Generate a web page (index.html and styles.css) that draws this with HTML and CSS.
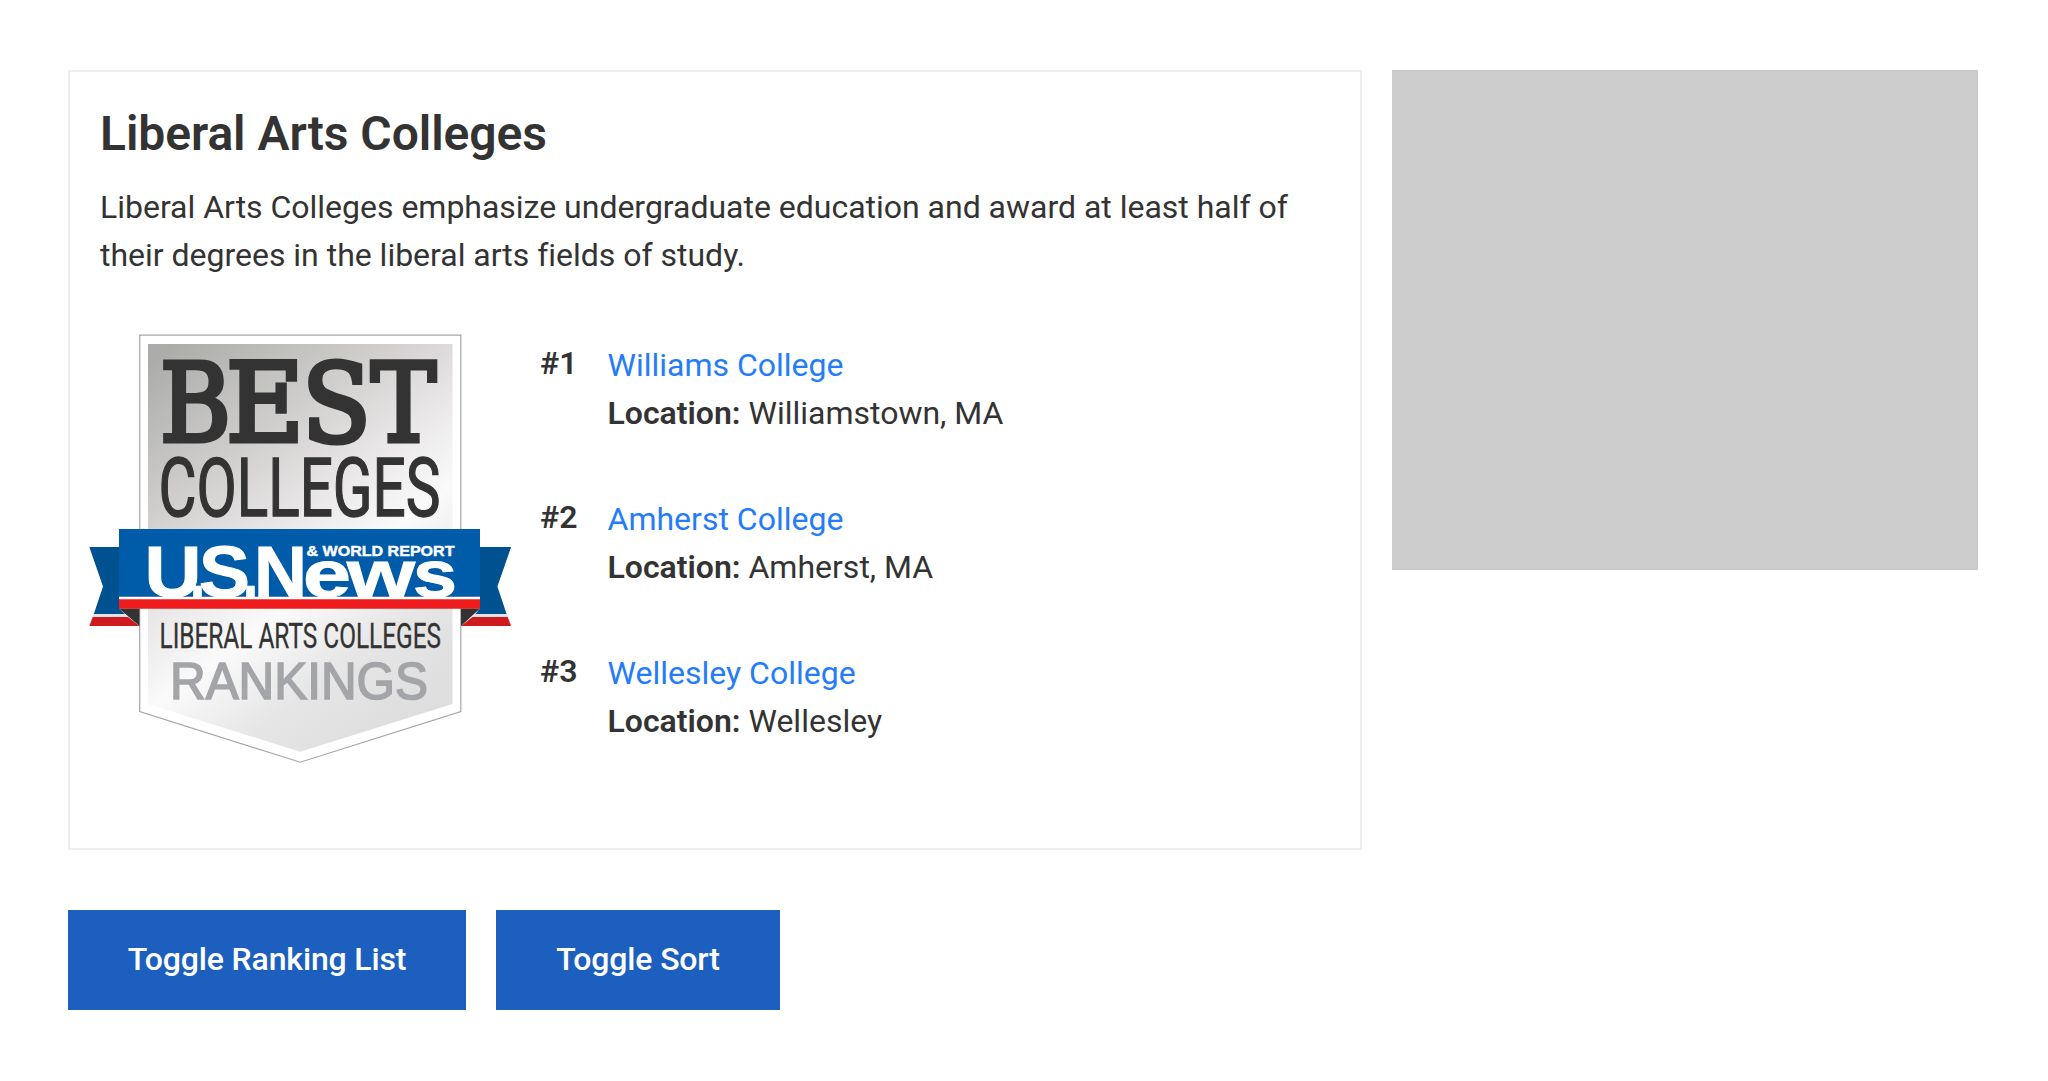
FILE: index.html
```html
<!DOCTYPE html>
<html lang="en">
<head>
<meta charset="utf-8">
<title>Liberal Arts Colleges</title>
<link rel="stylesheet" href="styles.css">
</head>
<body>
<main class="page">
  <div class="columns">
    <section class="card">
      <h2 class="card-title">Liberal Arts Colleges</h2>
      <p class="card-text">Liberal Arts Colleges emphasize undergraduate education and award at least half of their degrees in the liberal arts fields of study.</p>
      <div class="card-body">
        <svg class="badge" viewBox="88 330 426 436" role="img" aria-label="Best Colleges badge">
          <defs>
            <linearGradient id="silver" gradientUnits="userSpaceOnUse" x1="140" y1="370" x2="400" y2="720">
              <stop offset="0" stop-color="#acacab"/>
              <stop offset=".28" stop-color="#cfcecd"/>
              <stop offset=".5" stop-color="#eceaea"/>
              <stop offset=".64" stop-color="#fafafa"/>
              <stop offset=".82" stop-color="#e6e6e6"/>
              <stop offset="1" stop-color="#dedede"/>
            </linearGradient>
          </defs>
          <path d="M139.7 335.2H460.8V711.6L300.2 762.2L139.7 711.6Z" fill="#fff" stroke="#a5a6a9" stroke-width="1.2"/>
          <path d="M148 344H452.5V704L300.2 751.8L148 704Z" fill="url(#silver)"/>
          <path d="M89.3 547H119.5V609L125 614H93.8L103 586.5ZM511.1 547H479.5V609L475.4 614H506.6L497.4 586.5Z" fill="#00518f"/>
          <path d="M93.8 614H125L128 617H92.7ZM506.6 614H475.4L472.4 617H507.7Z" fill="#e3e1e4"/>
          <path d="M92.7 617H128L139.5 626H89.3ZM507.7 617H472.4L461 626H511.1Z" fill="#ce1b20"/>
          <path d="M119 608.5H139.5V626ZM480 608.5H461V626Z" fill="#333"/>
          <path d="M119 529H480V597H119Z" fill="#005ba8"/>
          <path d="M119 596.8H480V599.5H119Z" fill="#fff"/>
          <path d="M119 599.2H480V608.8H119Z" fill="#ee1c1c"/>
          <g class="best">
            <text x="160" y="441" textLength="71" lengthAdjust="spacingAndGlyphs">B</text>
            <text x="226" y="441" textLength="78" lengthAdjust="spacingAndGlyphs">E</text>
            <text x="302" y="441" textLength="69" lengthAdjust="spacingAndGlyphs">S</text>
            <text x="371" y="441" textLength="65" lengthAdjust="spacingAndGlyphs">T</text>
          </g>
          <text class="colleges" x="158.5" y="516" textLength="282" lengthAdjust="spacingAndGlyphs">COLLEGES</text>
          <g class="usnews">
            <text x="144.5" y="597" textLength="57" lengthAdjust="spacingAndGlyphs">U</text>
            <text x="190" y="597" textLength="15" lengthAdjust="spacingAndGlyphs">.</text>
            <text x="199" y="597" textLength="51" lengthAdjust="spacingAndGlyphs">S</text>
            <text x="243" y="597" textLength="15" lengthAdjust="spacingAndGlyphs">.</text>
            <text x="254" y="597" textLength="53" lengthAdjust="spacingAndGlyphs">N</text>
            <g class="lower">
              <text x="303" y="597" textLength="48" lengthAdjust="spacingAndGlyphs">e</text>
              <text x="347" y="597" textLength="68" lengthAdjust="spacingAndGlyphs">w</text>
              <text x="413" y="597" textLength="44" lengthAdjust="spacingAndGlyphs">s</text>
            </g>
          </g>
          <text class="world" x="306.5" y="556" textLength="148" lengthAdjust="spacingAndGlyphs">&amp; WORLD REPORT</text>
          <text class="category" x="159.5" y="648" textLength="281.5" lengthAdjust="spacingAndGlyphs">LIBERAL ARTS COLLEGES</text>
          <text class="rankings" x="170" y="699" textLength="258" lengthAdjust="spacingAndGlyphs">RANKINGS</text>
        </svg>
        <ol class="ranking">
          <li class="item"><strong class="rank">#1</strong><div class="school"><a class="name" href="#">Williams College</a><div><strong>Location:</strong> Williamstown, MA</div></div></li>
          <li class="item"><strong class="rank">#2</strong><div class="school"><a class="name" href="#">Amherst College</a><div><strong>Location:</strong> Amherst, MA</div></div></li>
          <li class="item"><strong class="rank">#3</strong><div class="school"><a class="name" href="#">Wellesley College</a><div><strong>Location:</strong> Wellesley</div></div></li>
        </ol>
      </div>
    </section>
    <aside class="ad"></aside>
  </div>
  <div class="actions">
    <button class="button button-list" type="button">Toggle Ranking List</button>
    <button class="button button-sort" type="button">Toggle Sort</button>
  </div>
</main>
</body>
</html>
```
FILE: styles.css
```css
* {
  box-sizing: border-box;
}

body {
  margin: 0;
  background: #fff;
  color: #333;
  font: 400 32px/48px Roboto, "Liberation Sans", sans-serif;
}

strong {
  font-weight: 600;
}

.page {
  padding: 70px 70px 0 68px;
}

.columns {
  display: flex;
  align-items: flex-start;
  gap: 30px;
}

.card {
  width: 1294px;
  height: 780px;
  padding: 34px 30px 0;
  border: 2px solid #eee;
}

.card-title {
  margin: 0 0 21px;
  font-size: 48px;
  line-height: 56px;
  font-weight: 600;
  letter-spacing: -.06px;
}

.card-text {
  margin: 0;
  letter-spacing: -.015px;
}

.card-body {
  display: flex;
  align-items: flex-start;
  margin: 51px 0 0 -12px;
}

.badge {
  flex: none;
  width: 426px;
  height: 436px;
}

.ranking {
  display: flex;
  flex-direction: column;
  gap: 56px;
  margin: 9px 0 0 26px;
  padding: 0;
  list-style: none;
}

.item {
  display: flex;
}

.rank {
  width: 67.5px;
}

.school {
  padding-top: 2px;
}

.name {
  display: block;
  color: #247cfa;
  text-decoration: none;
}

.ad {
  width: 586px;
  height: 500px;
  background: #ccc;
}

.actions {
  display: flex;
  gap: 30px;
  margin-top: 60px;
}

.button {
  height: 100px;
  padding: 0 0 2px;
  border: 0;
  background: #1d5fbf;
  color: #fff;
  font: 500 32px/48px Roboto, "Liberation Sans", sans-serif;
  letter-spacing: -.15px;
}

.button-list {
  width: 398px;
}

.button-sort {
  width: 284px;
}

.best {
  fill: #333;
  stroke: #333;
  stroke-width: 5px;
  font: 400 109px "DejaVu Serif", serif;
}

.colleges {
  fill: #333;
  stroke: #333;
  stroke-width: 1.4px;
  font: 400 81.5px Roboto, sans-serif;
}

.usnews {
  fill: #fff;
  stroke: #fff;
  stroke-width: 1px;
  font: 700 73px "Liberation Sans", sans-serif;
}

.lower {
  font-size: 67px;
}

.world {
  fill: #fff;
  stroke: #fff;
  stroke-width: .4px;
  font: 700 14px "Liberation Sans", sans-serif;
}

.category {
  fill: #333;
  stroke: #333;
  stroke-width: .3px;
  font: 400 34.5px Roboto, sans-serif;
}

.rankings {
  fill: #a3a5a8;
  stroke: #a3a5a8;
  stroke-width: 1.6px;
  font: 400 51px "Liberation Sans", sans-serif;
}
```
